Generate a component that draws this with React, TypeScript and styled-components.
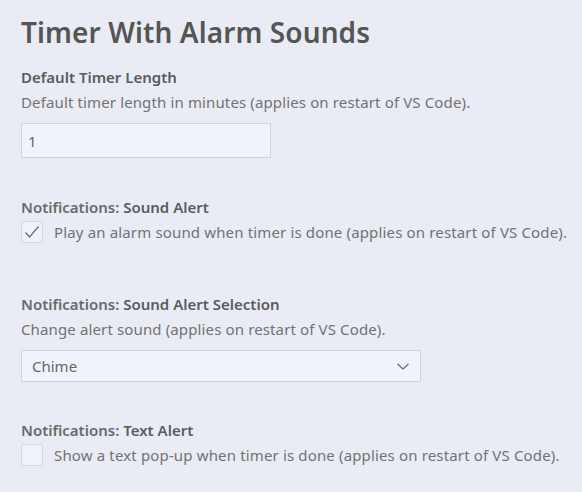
import React from "react";
import styled, { createGlobalStyle } from "styled-components";

const Global = createGlobalStyle`
  html, body { margin: 0; padding: 0; background: #e9ecf4; }
  body { font-family: "Noto Sans", "Open Sans", sans-serif; }
`;

const Page = styled.div`
  padding: 13px 0 0 21px;
  display: flex;
  flex-direction: column;
`;

const Title = styled.h1`
  margin: 0 0 15px 0;
  font-size: 28px;
  line-height: 38px;
  font-weight: 600;
  letter-spacing: 0.1px;
  color: #555555;
`;

const Setting = styled.section<{ $after?: number }>`
  display: flex;
  flex-direction: column;
  margin-bottom: ${(p) => p.$after ?? 40}px;
`;

const Label = styled.div`
  font-size: 15px;
  line-height: 22px;
  font-weight: 600;
  color: #5b5b5b;
`;

const Category = styled.span`
  color: #6a6a6a;
`;

const Description = styled.div`
  margin-top: 3px;
  font-size: 15px;
  line-height: 22px;
  letter-spacing: 0.13px;
  white-space: nowrap;
  color: #727272;
`;

const TextInput = styled.input`
  box-sizing: border-box;
  margin-top: 10px;
  width: 250px;
  height: 35px;
  padding: 0 6px;
  border: 1px solid #cfd3dc;
  background: #f0f3fb;
  font-family: inherit;
  font-size: 15px;
  color: #666666;
  outline: none;
`;

const CheckRow = styled.label`
  display: flex;
  align-items: center;
  gap: 11px;
  margin-top: 3px;
  font-size: 15px;
  letter-spacing: 0.15px;
  white-space: nowrap;
  color: #727272;
`;

const Box = styled.span`
  box-sizing: border-box;
  width: 22px;
  height: 22px;
  border: 1px solid #d3d7df;
  border-radius: 3px;
  background: #f0f3fb;
  display: flex;
  align-items: center;
  justify-content: center;
  flex: none;
`;

const SelectBox = styled.div`
  box-sizing: border-box;
  margin-top: 10px;
  width: 400px;
  height: 32px;
  border: 1px solid #cfd3dc;
  background: #f0f3fb;
  display: flex;
  align-items: center;
  justify-content: space-between;
  padding: 0 9px 0 10px;
  font-size: 15px;
  color: #666666;
`;

const Check = () => (
  <svg width="18" height="18" viewBox="0 0 18 18" fill="none">
    <path d="M2.5 9.5 L6.5 14 L15.5 3.5" stroke="#6a6a6a" strokeWidth="1.2" />
  </svg>
);

const Chevron = () => (
  <svg width="16" height="16" viewBox="0 0 16 16" fill="none">
    <path d="M2.5 6 L8 11 L13.5 6" stroke="#6a6a6a" strokeWidth="1.2" />
  </svg>
);

export default function App() {
  return (
    <>
      <Global />
      <Page>
        <Title>Timer With Alarm Sounds</Title>
        <Setting $after={38}>
          <Label>Default Timer Length</Label>
          <Description>Default timer length in minutes (applies on restart of VS Code).</Description>
          <TextInput defaultValue="1" />
        </Setting>
        <Setting $after={50}>
          <Label><Category>Notifications: </Category>Sound Alert</Label>
          <CheckRow>
            <Box><Check /></Box>
            Play an alarm sound when timer is done (applies on restart of VS Code).
          </CheckRow>
        </Setting>
        <Setting $after={37}>
          <Label><Category>Notifications: </Category>Sound Alert Selection</Label>
          <Description>Change alert sound (applies on restart of VS Code).</Description>
          <SelectBox>
            <span>Chime</span>
            <Chevron />
          </SelectBox>
        </Setting>
        <Setting>
          <Label><Category>Notifications: </Category>Text Alert</Label>
          <CheckRow>
            <Box />
            Show a text pop-up when timer is done (applies on restart of VS Code).
          </CheckRow>
        </Setting>
      </Page>
    </>
  );
}
